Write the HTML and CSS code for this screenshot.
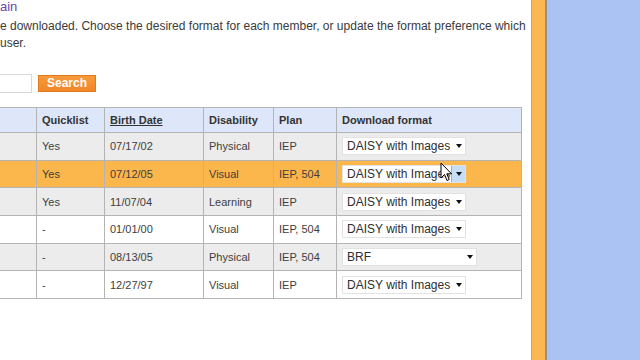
FILE: index.html
```html
<!DOCTYPE html>
<html lang="en">
<head>
    <meta charset="UTF-8">
    <meta name="viewport" content="width=device-width, initial-scale=1.0">
    <title>Members - Download format</title>
    <link rel="stylesheet" href="styles.css">
</head>
<body>
    <div class="page">
        <a class="help-link" href="#">ain</a>
        <p class="intro">e downloaded. Choose the desired format for each member, or update the format preference which<br>user.</p>

        <div class="search-row">
            <input class="search-input" type="text">
            <button class="btn-search">Search</button>
        </div>

        <table class="members">
            <colgroup>
                <col class="col-name">
                <col class="col-quick">
                <col class="col-date">
                <col class="col-dis">
                <col class="col-plan">
                <col class="col-format">
            </colgroup>
            <tr class="head">
                <th></th>
                <th>Quicklist</th>
                <th><a href="#">Birth Date</a></th>
                <th>Disability</th>
                <th>Plan</th>
                <th>Download format</th>
            </tr>
            <tr class="alt">
                <td></td><td>Yes</td><td>07/17/02</td><td>Physical</td><td>IEP</td>
                <td><div class="select"><span>DAISY with Images</span><i class="arrow"></i></div></td>
            </tr>
            <tr class="active">
                <td></td><td>Yes</td><td>07/12/05</td><td>Visual</td><td>IEP, 504</td>
                <td class="format-cell">
                    <div class="select hover"><span>DAISY with Images</span><i class="arrow"></i></div>
                    <svg class="cursor" width="13" height="20" viewBox="0 0 13 20">
                        <path d="M1 1 L1 16 L4.5 12.5 L7 18.5 L9.2 17.5 L6.8 11.8 L11.5 11.8 Z" fill="#fff" stroke="#000" stroke-width="1" stroke-linejoin="round"/>
                    </svg>
                </td>
            </tr>
            <tr class="alt">
                <td></td><td>Yes</td><td>11/07/04</td><td>Learning</td><td>IEP</td>
                <td><div class="select"><span>DAISY with Images</span><i class="arrow"></i></div></td>
            </tr>
            <tr>
                <td></td><td>-</td><td>01/01/00</td><td>Visual</td><td>IEP, 504</td>
                <td><div class="select"><span>DAISY with Images</span><i class="arrow"></i></div></td>
            </tr>
            <tr class="alt">
                <td></td><td>-</td><td>08/13/05</td><td>Physical</td><td>IEP, 504</td>
                <td><div class="select wide"><span>BRF</span><i class="arrow"></i></div></td>
            </tr>
            <tr>
                <td></td><td>-</td><td>12/27/97</td><td>Visual</td><td>IEP</td>
                <td><div class="select"><span>DAISY with Images</span><i class="arrow"></i></div></td>
            </tr>
        </table>
    </div>
    <div class="stripe"></div>
    <div class="side"></div>
</body>
</html>
```

FILE: styles.css
```css
/* Page frame */
body {
    display: flex;
    height: 360px;
    margin: 0;
    font-family: "Liberation Sans", Arial, sans-serif;
    background: #abc3f2;
    overflow: hidden;
}

.page {
    width: 531px;
    flex-shrink: 0;
    background: #fff;
    overflow: hidden;
}

.stripe {
    width: 13px;
    flex-shrink: 0;
    background: #fbb852;
    border-left: 1px solid #d9a14c;
    border-right: 2px solid #9c8f7c;
}

.side {
    flex: 1;
}

/* Intro text */
.help-link {
    display: block;
    font-size: 13px;
    line-height: 13px;
    color: #6547b0;
    text-decoration: none;
}

.intro {
    margin: 5px 0 0 0;
    font-size: 12px;
    line-height: 17px;
    color: #3a3a3a;
}

/* Search */
.search-row {
    display: flex;
    align-items: center;
    gap: 6px;
    margin-top: 22px;
}

.search-input {
    width: 60px;
    height: 19px;
    margin-left: -28px;
    padding: 0;
    border: 1px solid #d8d8d8;
    box-sizing: border-box;
}

.btn-search {
    width: 58px;
    height: 17px;
    padding: 0;
    border: 1px solid #e07a1c;
    background: linear-gradient(#f89a3c, #f08628);
    color: #fff;
    font-family: "Liberation Sans", Arial, sans-serif;
    font-size: 12px;
    font-weight: bold;
    line-height: 15px;
}

/* Members table */
.members {
    margin: 14px 0 0 -50px;
    border-collapse: collapse;
    table-layout: fixed;
    width: 571px;
    font-size: 11px;
    color: #3e3e3e;
}

.col-name { width: 86px; }
.col-quick { width: 68px; }
.col-date { width: 99px; }
.col-dis { width: 70px; }
.col-plan { width: 63px; }
.col-format { width: 185px; }

.members th,
.members td {
    border: 1px solid #b4b4b4;
    padding: 0 0 0 5px;
    text-align: left;
    white-space: nowrap;
}

.members tr {
    height: 27.7px;
}

.members tr.head {
    height: 25px;
    background: #dde7f9;
}

.members th {
    font-weight: bold;
    color: #333;
}

.members th a {
    color: #333;
}

.members tr.alt {
    background: #ececec;
}

.members tr.active {
    background: #fbb64c;
}

/* Format select */
.select {
    display: flex;
    align-items: center;
    justify-content: space-between;
    width: 124px;
    height: 18px;
    box-sizing: border-box;
    border: 1px solid #e2e2e2;
    background: #fff;
    font-size: 12px;
    color: #2e2e2e;
    padding-left: 4px;
}

.select.wide {
    width: 135px;
}

.arrow {
    display: flex;
    align-items: center;
    justify-content: center;
    width: 13px;
    height: 16px;
}

.arrow::after {
    content: "";
    border-left: 3.5px solid transparent;
    border-right: 3.5px solid transparent;
    border-top: 4px solid #111;
}

.select.hover .arrow {
    background: #c6ddf6;
    border-left: 1px solid #8fb3dc;
}

.format-cell {
    position: relative;
}

.cursor {
    position: absolute;
    left: 103px;
    top: 1px;
}
```
